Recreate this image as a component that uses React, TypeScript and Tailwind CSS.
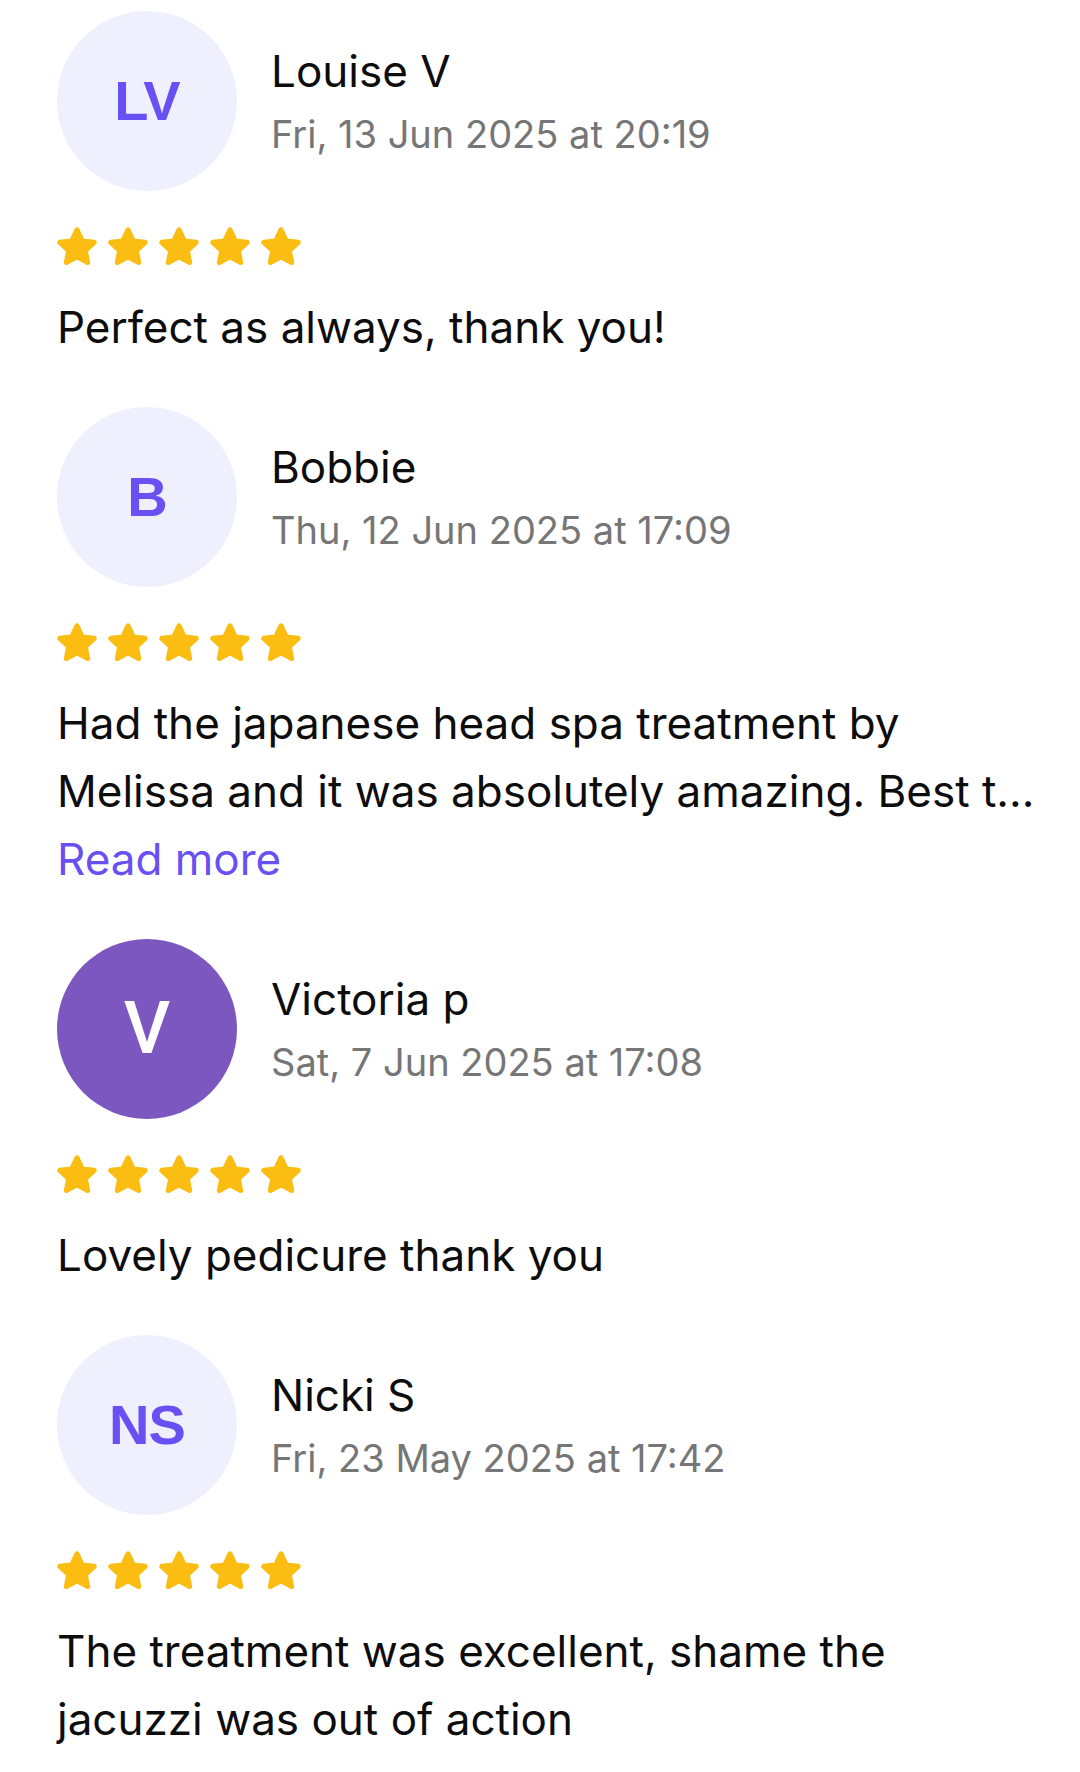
import React from "react";

type Review = {
  initials: string;
  name: string;
  date: string;
  lines: string[];
  readMore?: boolean;
  solid?: boolean;
};

const reviews: Review[] = [
  {
    initials: "LV",
    name: "Louise V",
    date: "Fri, 13 Jun 2025 at 20:19",
    lines: ["Perfect as always, thank you!"],
  },
  {
    initials: "B",
    name: "Bobbie",
    date: "Thu, 12 Jun 2025 at 17:09",
    lines: [
      "Had the japanese head spa treatment by",
      "Melissa and it was absolutely amazing. Best t...",
    ],
    readMore: true,
  },
  {
    initials: "V",
    name: "Victoria p",
    date: "Sat, 7 Jun 2025 at 17:08",
    lines: ["Lovely pedicure thank you"],
    solid: true,
  },
  {
    initials: "NS",
    name: "Nicki S",
    date: "Fri, 23 May 2025 at 17:42",
    lines: ["The treatment was excellent, shame the", "jacuzzi was out of action"],
  },
];

function Star() {
  return (
    <svg width="40" height="38" viewBox="1 0.2 22 21" className="shrink-0">
      <path
        d="M12 1.8 L14.9 7.9 L21.5 8.7 L16.6 13.3 L17.9 19.8 L12 16.6 L6.1 19.8 L7.4 13.3 L2.5 8.7 L9.1 7.9 Z"
        fill="#fbbd12"
        stroke="#fbbd12"
        strokeWidth="2.8"
        strokeLinejoin="round"
      />
    </svg>
  );
}

function ReviewItem({ r }: { r: Review }) {
  return (
    <div className="flex flex-col pb-[46px]">
      <div className="flex flex-row items-center gap-[34px]">
        {r.solid ? (
          <div className="flex h-[180px] w-[180px] shrink-0 items-center justify-center rounded-full bg-[#7b57bf]">
            <span className="font-['Roboto',Arial,sans-serif] text-[72px] font-medium leading-none text-white">
              {r.initials}
            </span>
          </div>
        ) : (
          <div className="flex h-[180px] w-[180px] shrink-0 items-center justify-center rounded-full bg-[#eff0fd]">
            <span className="font-['Liberation_Sans',Arial,sans-serif] text-[56px] font-bold leading-none tracking-[-1px] text-[#6950f3]">
              {r.initials}
            </span>
          </div>
        )}
        <div className="flex flex-col">
          <div className="text-[44px] leading-[60px] text-[#0d0d0d]">{r.name}</div>
          <div className="mt-[5px] text-[38px] leading-[56px] text-[#767676]">{r.date}</div>
        </div>
      </div>
      <div className="mt-[36px] flex flex-row gap-[11px]">
        <Star />
        <Star />
        <Star />
        <Star />
        <Star />
      </div>
      <div className="mt-[28px] whitespace-nowrap text-[44px] leading-[68px] text-[#0d0d0d]">
        {r.lines.map((l, i) => (
          <div key={i}>{l}</div>
        ))}
        {r.readMore && <div className="text-[#6950f3]">Read more</div>}
      </div>
    </div>
  );
}

export default function App() {
  return (
    <div className="min-h-[1772px] w-[1080px] overflow-hidden bg-white px-[57px] pt-[11px] font-['Inter',sans-serif]">
      {reviews.map((r, i) => (
        <ReviewItem key={i} r={r} />
      ))}
    </div>
  );
}
